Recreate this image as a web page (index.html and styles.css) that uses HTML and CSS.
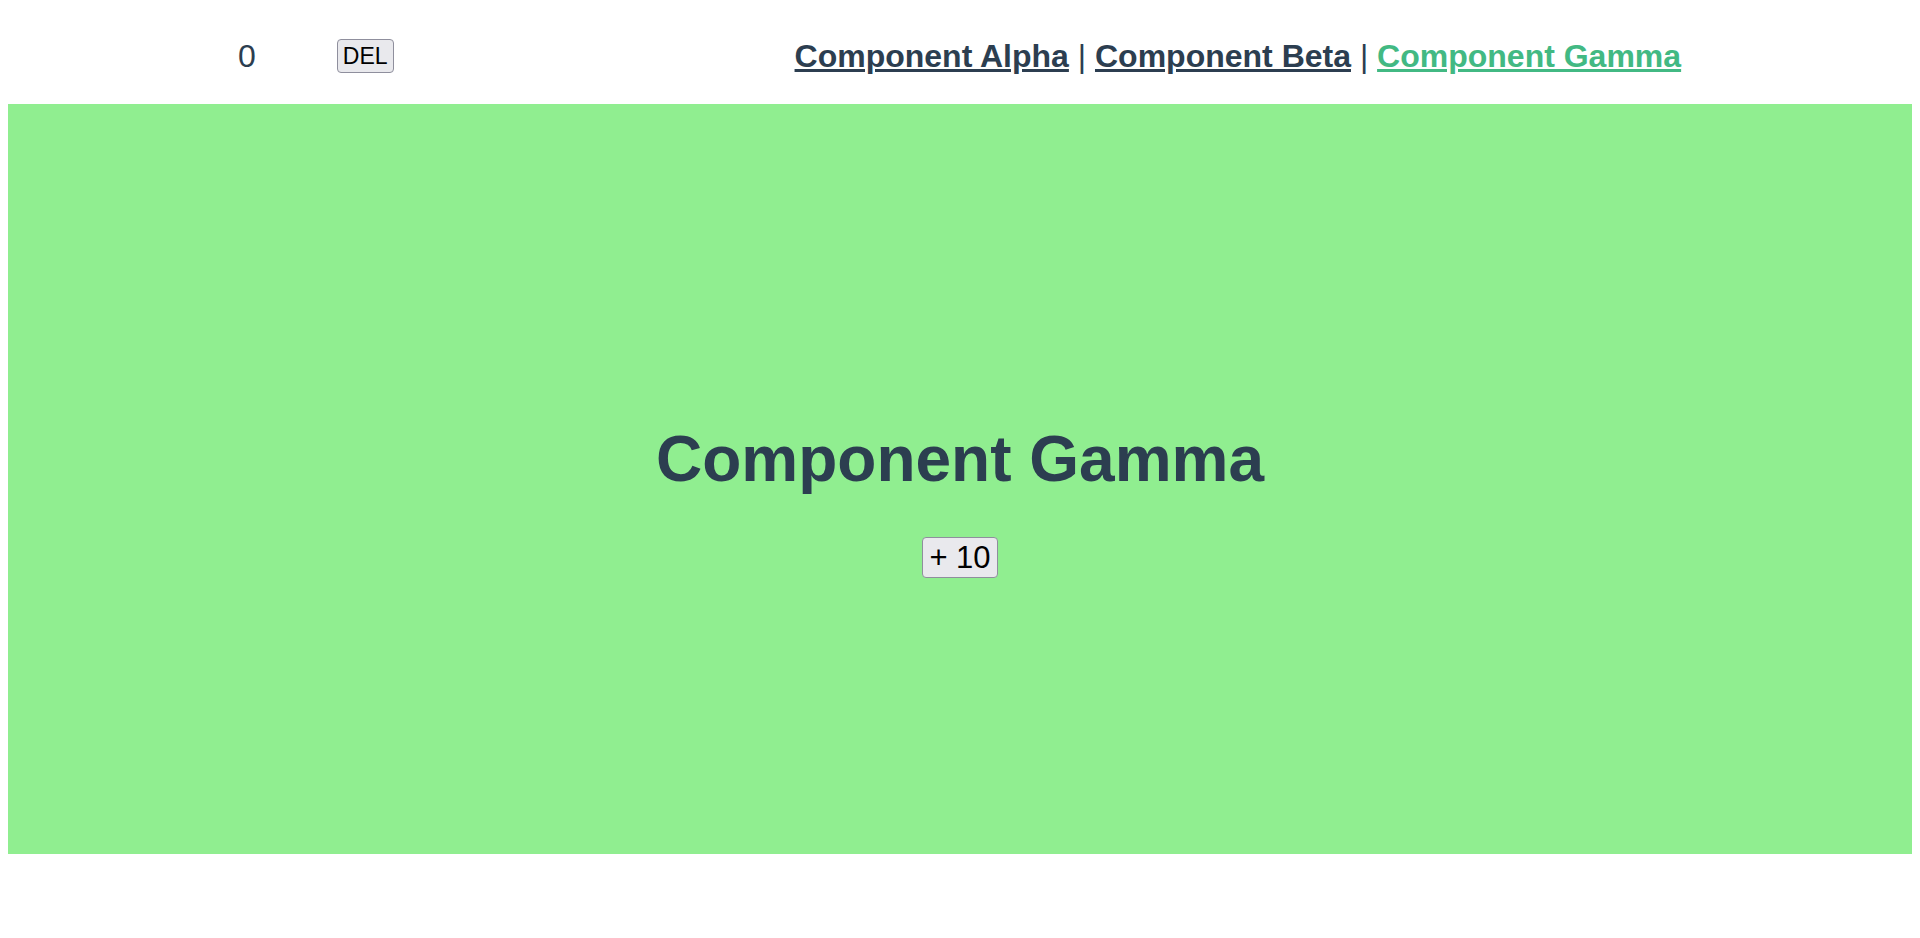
FILE: index.html
```html
<!DOCTYPE html>
<html lang="en">
<head>
<meta charset="utf-8">
<title>Component Gamma</title>
<link rel="stylesheet" href="styles.css">
</head>
<body>
<div id="app">
  <header class="topbar">
    <span class="count">0</span>
    <button class="btn btn-del">DEL</button>
    <nav class="nav">
      <a href="#alpha" class="nav-link">Component Alpha</a> | <a href="#beta" class="nav-link">Component Beta</a> | <a href="#gamma" class="nav-link active">Component Gamma</a>
    </nav>
  </header>
  <main class="panel">
    <h1 class="title">Component Gamma</h1>
    <button class="btn btn-add">+ 10</button>
  </main>
</div>
</body>
</html>
```

FILE: styles.css
```css
html, body {
  background: #ffffff;
}
body {
  margin: 8px;
}
#app {
  font-family: "Liberation Sans", Arial, Helvetica, sans-serif;
  color: #2c3e50;
  text-align: center;
  -webkit-font-smoothing: antialiased;
}
.topbar {
  display: flex;
  align-items: center;
  height: 96px;
  padding-left: 230px;
}
.count {
  font-size: 32px;
  line-height: 37px;
}
.btn {
  font-family: "Liberation Sans", Arial, Helvetica, sans-serif;
  color: #000000;
  background: #e9e9ed;
  border: 1px solid #8f8f9d;
  border-radius: 4px;
  margin: 0;
  cursor: pointer;
}
.btn-del {
  margin-left: 81px;
  font-size: 23px;
  line-height: 28px;
  padding: 2px 5px;
}
.nav {
  margin-left: 401px;
  font-size: 32px;
  line-height: 37px;
  white-space: nowrap;
}
.nav-link {
  font-weight: bold;
  color: #2c3e50;
  text-decoration: underline;
}
.nav-link.active {
  color: #42b983;
}
.panel {
  background: #90ee90;
  height: 750px;
  display: flex;
  flex-direction: column;
  align-items: center;
  justify-content: center;
}
.title {
  font-size: 64px;
  font-weight: bold;
  margin: 42px 0 41px;
}
.btn-add {
  font-size: 31px;
  line-height: 35px;
  padding: 2px 6px;
}
```
